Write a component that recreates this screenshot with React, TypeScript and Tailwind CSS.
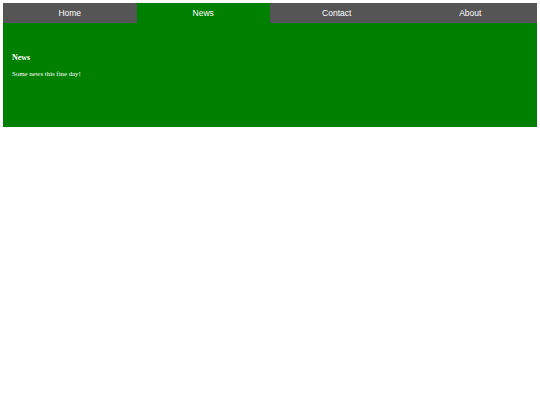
import React, { useState } from "react";

const tabs = [
  { name: "Home", title: "Home", text: "Home is where the heart is.." },
  { name: "News", title: "News", text: "Some news this fine day!" },
  { name: "Contact", title: "Contact", text: "Get in touch, or swing by for a cup of coffee." },
  { name: "About", title: "About", text: "Who we are and what we do." },
];

export default function App() {
  const [active, setActive] = useState("News");
  const current = tabs.find((t) => t.name === active)!;

  return (
    <div className="w-[540px] h-[405px] bg-white p-[3px]">
      <div className="flex h-[20px]">
        {tabs.map((t) => (
          <button
            key={t.name}
            type="button"
            onClick={() => setActive(t.name)}
            className={`flex-1 flex items-center justify-center pt-px text-[8.5px] text-white font-['Liberation_Sans',Arial,sans-serif] ${
              active === t.name ? "bg-[#008000]" : "bg-[#555555]"
            }`}
          >
            {t.name}
          </button>
        ))}
      </div>
      <div className="h-[104px] bg-[#008000] text-white px-[9px] pt-[30px] font-['Liberation_Serif','Times_New_Roman',serif]">
        <h3 className="text-[8px] font-bold leading-[10px]">{current.title}</h3>
        <p className="text-[6.8px] leading-[8px] mt-[7px]">{current.text}</p>
      </div>
    </div>
  );
}
